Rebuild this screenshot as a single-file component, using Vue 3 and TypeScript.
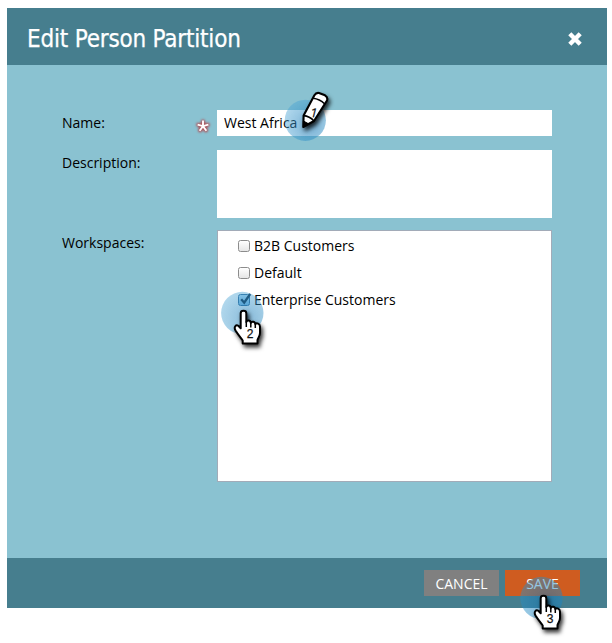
<script setup lang="ts">
import { ref } from 'vue'

interface Workspace {
  name: string
  selected: boolean
}

const name = ref('West Africa')
const description = ref('')
const workspaces = ref<Workspace[]>([
  { name: 'B2B Customers', selected: false },
  { name: 'Default', selected: false },
  { name: 'Enterprise Customers', selected: true },
])
</script>

<template>
  <div class="page">
  <main class="dialog">
    <header class="header">
      <h1 class="title">Edit Person Partition</h1>
      <button class="close" aria-label="Close">
        <svg width="16" height="16" viewBox="0 0 16 16">
          <path d="M2.8 2.8 L13.2 13.2 M13.2 2.8 L2.8 13.2" fill="none" stroke="#fff" stroke-width="4.4" />
        </svg>
      </button>
    </header>

    <section class="body">
      <div class="row name-row">
        <span class="label">Name:</span>
        <svg class="required" width="18" height="18" viewBox="0 0 18 18">
          <g fill="none" stroke-linecap="round">
            <path class="glow" d="M9 9.2V4.4M9 9.2L4.3 7.8M9 9.2L13.7 7.8M9 9.2L6 13.2M9 9.2L12 13.2" stroke="#b04a50" stroke-width="4" />
            <path d="M9 9.2V3.6M9 9.2L3.6 7.6M9 9.2L14.4 7.6M9 9.2L5.6 13.8M9 9.2L12.4 13.8" stroke="#fff" stroke-width="1.9" stroke-linecap="butt" />
          </g>
        </svg>
        <div class="field">
          <input v-model="name" class="input name-input" type="text" />
          <svg class="marker marker-pen" width="60" height="60" viewBox="0 0 60 60">
            <defs>
              <radialGradient id="spot-pen" cx=".62" cy=".62" r=".7">
                <stop offset="0" stop-color="#1878b4" stop-opacity=".6" />
                <stop offset="1" stop-color="#4aa5d6" stop-opacity=".42" />
              </radialGradient>
            </defs>
            <circle class="soft" cx="25.3" cy="35.3" r="20.6" fill="url(#spot-pen)" />
            <g class="shadow" stroke="#000" stroke-width="2.1" stroke-linejoin="round">
              <path d="M23.3 42 L23.6 30.6 L34.4 10.2 Q36 7.5 39 8 L45 10.3 Q48.2 12.3 47 15.5 L34 36 Z" fill="#fff" />
              <path d="M23.6 30.6 Q29.5 31 34 36 M33.1 13.3 Q39.5 14 44.8 19" fill="none" stroke-width="1.6" />
              <path d="M23.3 42 L23.4 36 L28.2 38.6 Z" fill="#000" stroke-width="1" />
            </g>
            <text x="34" y="32.3" class="step pen-step" transform="rotate(14 34 28)">1</text>
          </svg>
        </div>
      </div>

      <div class="row description-row">
        <span class="label">Description:</span>
        <textarea v-model="description" class="input area"></textarea>
      </div>

      <div class="row">
        <span class="label">Workspaces:</span>
        <div class="list">
          <label v-for="w in workspaces" :key="w.name" class="option">
            <span class="check" :class="{ on: w.selected }">
              <input v-model="w.selected" type="checkbox" class="native" />
              <svg v-if="w.selected" class="tick" width="15" height="15" viewBox="0 0 15 15">
                <path d="M3.2 7.2 L6.2 10.7 L12.2 2" fill="none" stroke="#0c2c48" stroke-width="2.3" />
              </svg>
            </span>
            <span>{{ w.name }}</span>
            <svg v-if="w.selected" class="marker marker-list" width="60" height="70" viewBox="0 0 60 70">
              <defs>
                <radialGradient id="spot-list" cx=".62" cy=".62" r=".7">
                  <stop offset="0" stop-color="#1878b4" stop-opacity=".52" />
                  <stop offset="1" stop-color="#4aa5d6" stop-opacity=".42" />
                </radialGradient>
              </defs>
              <circle class="soft" cx="22.3" cy="23" r="21.2" fill="url(#spot-list)" />
              <path class="shadow hand" d="M20.7 38.2 V23.3 C20.7 20 26.3 20 26.3 23.3 V32 C27 29.7 30.8 30.2 30.8 33 C31.6 30.8 35.3 31.5 35.3 34.2 C36.5 32.5 40 33.4 40 36.7 V43 C40 46 38 48 37.5 50 V53.5 H22.7 V50.5 C20.5 47.5 18 44.5 15.5 40.5 C13.5 37 16 34.2 18.3 35.8 Z" />
              <path d="M26.3 31.5V37M30.8 33V37.5M35.3 34.5V38" stroke="#000" stroke-width="1.5" fill="none" />
              <text x="30" y="48.3" class="step">2</text>
            </svg>
          </label>
        </div>
      </div>
    </section>

    <footer class="footer">
      <button class="button">CANCEL</button>
      <div class="save-wrap">
        <button class="button save">SAVE</button>
        <svg class="marker marker-save" width="60" height="70" viewBox="0 0 60 70">
          <defs>
            <radialGradient id="spot-save" cx=".62" cy=".62" r=".7">
              <stop offset="0" stop-color="#1272b0" stop-opacity=".55" />
              <stop offset="1" stop-color="#2a94cc" stop-opacity=".45" />
            </radialGradient>
          </defs>
          <circle class="soft" cx="21.5" cy="23" r="21.2" fill="url(#spot-save)" />
          <path class="shadow hand" d="M20.7 38.2 V23.3 C20.7 20 26.3 20 26.3 23.3 V32 C27 29.7 30.8 30.2 30.8 33 C31.6 30.8 35.3 31.5 35.3 34.2 C36.5 32.5 40 33.4 40 36.7 V43 C40 46 38 48 37.5 50 V53.5 H22.7 V50.5 C20.5 47.5 18 44.5 15.5 40.5 C13.5 37 16 34.2 18.3 35.8 Z" />
          <path d="M26.3 31.5V37M30.8 33V37.5M35.3 34.5V38" stroke="#000" stroke-width="1.5" fill="none" />
          <text x="30" y="48.3" class="step">3</text>
        </svg>
      </div>
    </footer>
  </main>
  </div>
</template>

<style>
body {
  background: #fff;
}
</style>

<style scoped>
.page {
  display: flex;
  align-items: flex-start;
  box-sizing: border-box;
  height: 643px;
  padding: 8px 0 0 7px;
}
.dialog {
  box-sizing: border-box;
  width: 600px;
  height: 600px;
  display: flex;
  flex-direction: column;
  background: #8ac2d1;
  color: #000;
  font: 14px/20px "Open Sans", "Noto Sans", sans-serif;
}
.header {
  height: 57px;
  box-sizing: border-box;
  padding: 0 24px 0 20px;
  display: flex;
  align-items: center;
  justify-content: space-between;
  background: #467e8e;
}
.title {
  margin: 5px 0 0;
  color: #fff;
  font: 400 24px/32px "DejaVu Sans Condensed", "DejaVu Sans", sans-serif;
  letter-spacing: -0.2px;
  -webkit-text-stroke: 0.25px #fff;
  white-space: nowrap;
}
.close {
  display: flex;
  margin: 5px 0 0;
  padding: 0;
  border: 0;
  background: none;
}
.body {
  flex: 1;
  padding: 45px 55px 0;
}
.row {
  display: flex;
  align-items: flex-start;
}
.name-row {
  height: 40px;
}
.description-row {
  height: 80px;
}
.label {
  width: 155px;
  flex: none;
  padding-top: 3px;
}
.name-row .label {
  width: 132px;
}
.required {
  margin: 7px 5px 0 0;
  flex: none;
  overflow: visible;
}
.glow {
  filter: blur(1.3px);
}
.field {
  position: relative;
}
.input {
  display: block;
  box-sizing: border-box;
  width: 335px;
  height: 26px;
  margin: 0;
  padding: 0 7px;
  border: 0;
  border-radius: 0;
  outline: 0;
  background: #fff;
  color: #000;
  font: inherit;
}
.name-input {
  padding-bottom: 2px;
}
.area {
  height: 68px;
  resize: none;
}
.list {
  box-sizing: border-box;
  width: 335px;
  height: 252px;
  padding: 1px 20px;
  border: 1px solid #a2abb8;
  background: #fff;
}
.option {
  position: relative;
  display: flex;
  align-items: center;
  height: 27px;
  gap: 4px;
}
.check {
  position: relative;
  box-sizing: border-box;
  width: 12px;
  height: 12px;
  border: 1px solid #8c8c8c;
  border-radius: 2.5px;
  background: linear-gradient(#fff, #e6e6e6);
}
.check.on {
  border-color: #2f6b9a;
  background: linear-gradient(#b5dcf4, #7fbde8);
}
.native {
  position: absolute;
  inset: 0;
  margin: 0;
  opacity: 0;
}
.tick {
  position: absolute;
  left: -1px;
  top: -3px;
}
.footer {
  height: 50px;
  box-sizing: border-box;
  padding: 12px 27px;
  display: flex;
  justify-content: flex-end;
  gap: 6px;
  background: #467e8e;
}
.button {
  display: block;
  width: 75px;
  height: 26px;
  margin: 0;
  padding: 1px 0 0;
  border: 0;
  background: #808080;
  color: #fff;
  font: 14px/26px "Open Sans", "Noto Sans", sans-serif;
}
.save {
  background: #cf5c20;
}
.save-wrap {
  position: relative;
}
.marker {
  position: absolute;
  z-index: 1;
  overflow: visible;
  pointer-events: none;
}
.marker-pen {
  left: 63px;
  top: -25px;
}
.marker-list {
  left: -18px;
  top: 4px;
}
.marker-save {
  left: 15px;
  top: 5px;
}
.soft {
  filter: blur(0.5px);
}
.shadow {
  filter: drop-shadow(2px 3px 2.2px rgba(0, 0, 0, 0.8));
}
.hand {
  fill: #fff;
  stroke: #000;
  stroke-width: 2;
  stroke-linejoin: round;
}
.step {
  font: 12px "Liberation Sans", sans-serif;
  text-anchor: middle;
  fill: #111;
  stroke: #111;
  stroke-width: 0.25px;
}
.pen-step {
  font: 12.5px "Open Sans", sans-serif;
}
</style>
